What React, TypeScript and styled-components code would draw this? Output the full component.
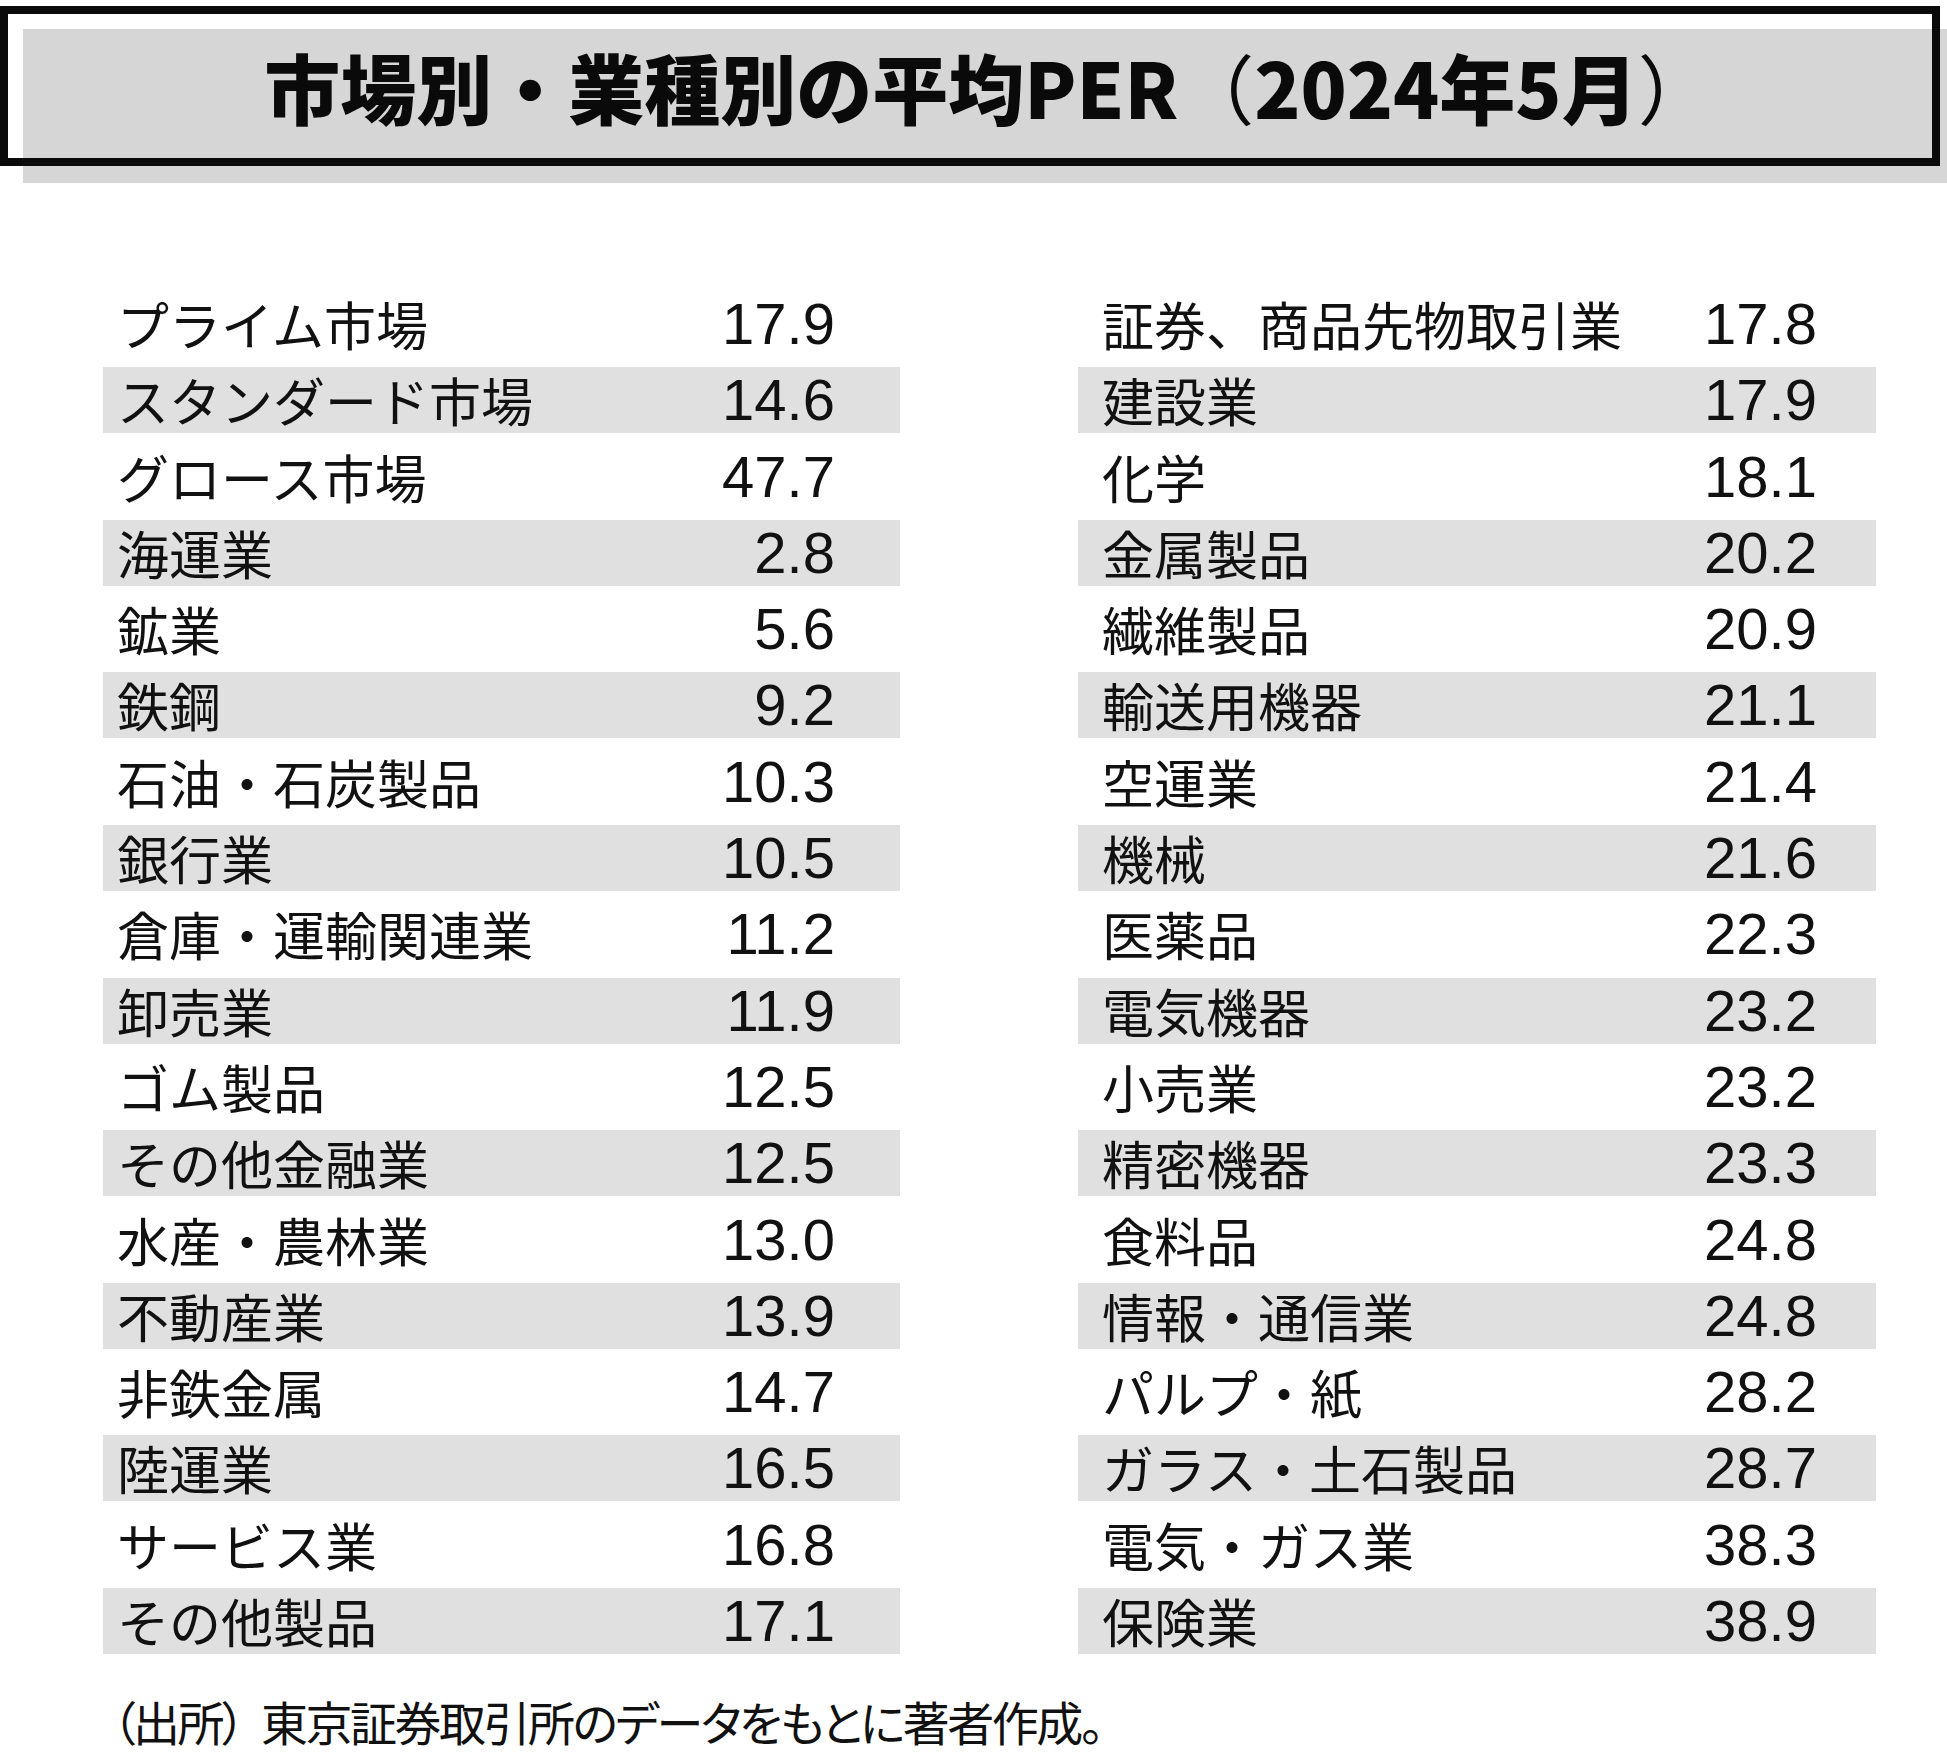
import React, { FC } from 'react'
import styled, { createGlobalStyle } from 'styled-components'

interface iRow {
  label: string
  value: string
}

const leftRows: iRow[] = [
  { label: 'プライム市場', value: '17.9' },
  { label: 'スタンダード市場', value: '14.6' },
  { label: 'グロース市場', value: '47.7' },
  { label: '海運業', value: '2.8' },
  { label: '鉱業', value: '5.6' },
  { label: '鉄鋼', value: '9.2' },
  { label: '石油・石炭製品', value: '10.3' },
  { label: '銀行業', value: '10.5' },
  { label: '倉庫・運輸関連業', value: '11.2' },
  { label: '卸売業', value: '11.9' },
  { label: 'ゴム製品', value: '12.5' },
  { label: 'その他金融業', value: '12.5' },
  { label: '水産・農林業', value: '13.0' },
  { label: '不動産業', value: '13.9' },
  { label: '非鉄金属', value: '14.7' },
  { label: '陸運業', value: '16.5' },
  { label: 'サービス業', value: '16.8' },
  { label: 'その他製品', value: '17.1' }
]

const rightRows: iRow[] = [
  { label: '証券、商品先物取引業', value: '17.8' },
  { label: '建設業', value: '17.9' },
  { label: '化学', value: '18.1' },
  { label: '金属製品', value: '20.2' },
  { label: '繊維製品', value: '20.9' },
  { label: '輸送用機器', value: '21.1' },
  { label: '空運業', value: '21.4' },
  { label: '機械', value: '21.6' },
  { label: '医薬品', value: '22.3' },
  { label: '電気機器', value: '23.2' },
  { label: '小売業', value: '23.2' },
  { label: '精密機器', value: '23.3' },
  { label: '食料品', value: '24.8' },
  { label: '情報・通信業', value: '24.8' },
  { label: 'パルプ・紙', value: '28.2' },
  { label: 'ガラス・土石製品', value: '28.7' },
  { label: '電気・ガス業', value: '38.3' },
  { label: '保険業', value: '38.9' }
]

const GlobalStyle = createGlobalStyle`
  body {
    margin: 0;
    background: #fff;
    color: #111;
    font-family: "Noto Sans CJK JP", "Noto Sans", sans-serif;
  }
`

const Page = styled.div`
  width: 1947px;
  padding-top: 6px;
`

const TitleBox = styled.div`
  position: relative;
  box-sizing: border-box;
  width: 1940px;
  height: 160px;
  border: 8px solid #0a0a0a;
  display: flex;
  align-items: center;
  justify-content: center;

  &::before {
    content: '';
    position: absolute;
    top: 15px;
    left: 15px;
    right: -15px;
    bottom: -25px;
    background: #d6d6d6;
    z-index: -1;
  }
`

const Title = styled.h1`
  margin: 0 0 0 38px;
  font-family: "Noto Sans CJK JP", sans-serif;
  font-size: 76px;
  font-weight: 900;
  line-height: 1;
  color: #0a0a0a;
`

const Paren = styled.span`
  font-weight: 400;
`

const Columns = styled.div`
  display: grid;
  grid-template-columns: 797px 798px;
  column-gap: 178px;
  margin-top: 125px;
  padding-left: 103px;
`

const Column = styled.div`
  display: flex;
  flex-direction: column;
  gap: 10.3px;
`

const Row = styled.div<{ $striped: boolean; $padLeft: number; $padRight: number }>`
  height: 66px;
  display: flex;
  align-items: center;
  justify-content: space-between;
  padding: 0 ${(p) => p.$padRight}px 0 ${(p) => p.$padLeft}px;
  background: ${(p) => (p.$striped ? '#e0e0e0' : 'transparent')};
`

const Label = styled.span`
  font-family: "Noto Sans CJK JP", sans-serif;
  font-size: 52px;
  line-height: 1;
  color: #111;
`

const Value = styled.span`
  font-family: "Liberation Sans", Arial, sans-serif;
  font-size: 58px;
  line-height: 1;
  color: #111;
`

const Footnote = styled.p`
  margin: 38px 0 0 112px;
  font-family: "Noto Sans CJK JP", sans-serif;
  font-size: 47px;
  line-height: 58px;
  letter-spacing: -2.5px;
  font-feature-settings: 'palt';
  color: #111;
`

const Source = styled.span`
  margin-right: 18px;
`

const TableColumn: FC<{ rows: iRow[]; padLeft: number; padRight: number }> = ({
  rows,
  padLeft,
  padRight
}) => (
  <Column>
    {rows.map((r, i) => (
      <Row key={r.label} $striped={i % 2 === 1} $padLeft={padLeft} $padRight={padRight}>
        <Label>{r.label}</Label>
        <Value>{r.value}</Value>
      </Row>
    ))}
  </Column>
)

const App: FC = () => {
  return (
    <Page>
      <GlobalStyle />
      <TitleBox>
        <Title>
          市場別・業種別の平均PER<Paren>（</Paren>2024年5月<Paren>）</Paren>
        </Title>
      </TitleBox>
      <Columns>
        <TableColumn rows={leftRows} padLeft={14} padRight={65} />
        <TableColumn rows={rightRows} padLeft={24} padRight={59} />
      </Columns>
      <Footnote>
        <Source>（出所）</Source>東京証券取引所のデータをもとに著者作成。
      </Footnote>
    </Page>
  )
}

export default App
